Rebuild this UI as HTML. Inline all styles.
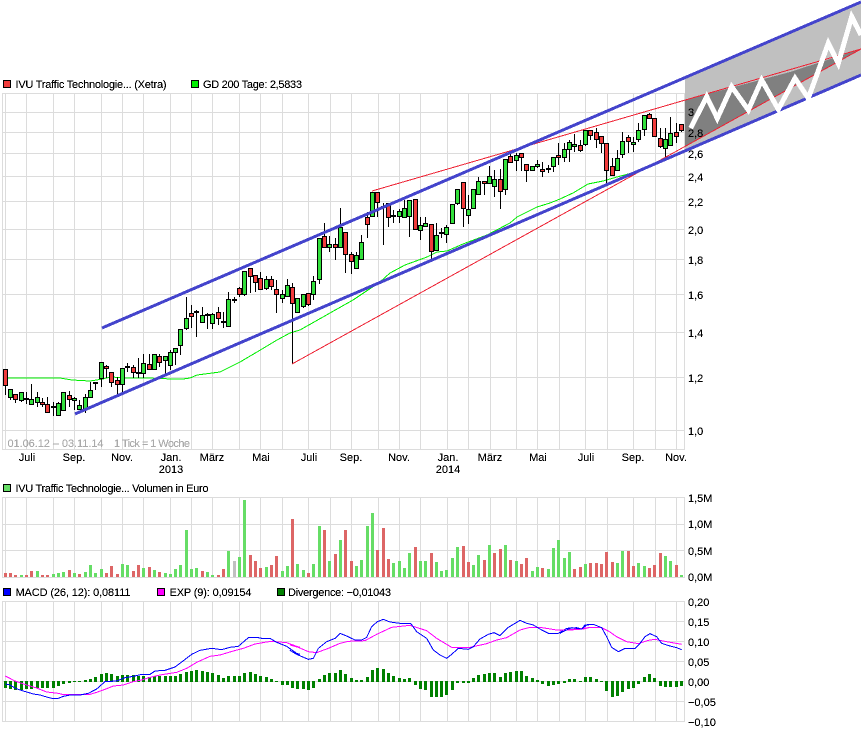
<!DOCTYPE html>
<html><head><meta charset="utf-8"><title>IVU Traffic Technologie Chart</title>
<style>html,body{margin:0;padding:0;background:#fff;width:861px;height:730px;overflow:hidden}svg{display:block}text{font-family:"Liberation Sans",sans-serif;font-size:11px;fill:#000;filter:url(#al)}</style></head>
<body>
<svg width="861" height="730" viewBox="0 0 861 730" shape-rendering="crispEdges">
<defs><filter id="al" x="-5%" y="-20%" width="110%" height="140%" color-interpolation-filters="sRGB"><feComponentTransfer><feFuncA type="linear" slope="3" intercept="-0.55"/></feComponentTransfer></filter></defs>
<!-- grid -->
<path fill="none" stroke="#dcdcdc" d="M2.5 93V450M5.5 93V450M26.5 93V450M53.5 93V450M74.5 93V450M101.5 93V450M122.5 93V450M143.5 93V450M170.5 93V450M191.5 93V450M212.5 93V450M239.5 93V450M260.5 93V450M282.5 93V450M308.5 93V450M330.5 93V450M351.5 93V450M378.5 93V450M399.5 93V450M420.5 93V450M447.5 93V450M468.5 93V450M490.5 93V450M516.5 93V450M537.5 93V450M559.5 93V450M585.5 93V450M607.5 93V450M633.5 93V450M655.5 93V450M676.5 93V450M684.5 93V450
M2 93.5H685M2 112.5H685M2 132.5H685M2 153.5H685M2 176.5H685M2 201.5H685M2 229.5H685M2 259.5H685M2 294.5H685M2 332.5H685M2 377.5H685M2 430.5H685M2 449.5H685
M2.5 497V578M5.5 497V578M26.5 497V578M53.5 497V578M74.5 497V578M101.5 497V578M122.5 497V578M143.5 497V578M170.5 497V578M191.5 497V578M212.5 497V578M239.5 497V578M260.5 497V578M282.5 497V578M308.5 497V578M330.5 497V578M351.5 497V578M378.5 497V578M399.5 497V578M420.5 497V578M447.5 497V578M468.5 497V578M490.5 497V578M516.5 497V578M537.5 497V578M559.5 497V578M585.5 497V578M607.5 497V578M633.5 497V578M655.5 497V578M676.5 497V578M684.5 497V578
M2 497.5H685M2 524.5H685M2 550.5H685M2 577.5H685
M2.5 601V722M5.5 601V722M26.5 601V722M53.5 601V722M74.5 601V722M101.5 601V722M122.5 601V722M143.5 601V722M170.5 601V722M191.5 601V722M212.5 601V722M239.5 601V722M260.5 601V722M282.5 601V722M308.5 601V722M330.5 601V722M351.5 601V722M378.5 601V722M399.5 601V722M420.5 601V722M447.5 601V722M468.5 601V722M490.5 601V722M516.5 601V722M537.5 601V722M559.5 601V722M585.5 601V722M607.5 601V722M633.5 601V722M655.5 601V722M676.5 601V722M684.5 601V722
M2 601.5H685M2 621.5H685M2 641.5H685M2 661.5H685M2 681.5H685M2 701.5H685M2 721.5H685"/>
<!-- forecast channel -->
<polygon fill="#c0c0c0" points="685,78 861,2 861,75 685,151"/>
<polygon fill="#808080" points="685,100 790,72 861,49 685,147"/>
<!-- GD200 -->
<g fill="none" stroke="#00ee00" stroke-width="1">
<polyline points="6,378 60,378 72,380 90,381 103,379 110,377 130,378 147,378 173,379 183,379 190,378 197,375 220,372 240,362 257,352 277,340 290,333 300,330 353,300 368,290 380,282 390,273 405,265 427,257 437,252 447,251 463,244 487,235 510,223 517,217 537,207 550,203 560,199 573,193 588,184 603,181 617,177 632,173 645,167 660,161 665,159"/>
</g>
<!-- wicks -->
<path fill="none" stroke="#000" d="M5.5 369V395M10.5 389V400M15.5 394V403M21.5 392V402M26.5 392V404M31.5 384V404M37.5 392V407M42.5 398V407M47.5 397V412M53.5 402V416M58.5 402V416M63.5 392V410M69.5 391V407M74.5 397V410M79.5 400V410M85.5 394V413M90.5 382V397M95.5 383V390M101.5 362V387M106.5 365V378M111.5 372V387M117.5 377V395M122.5 368V393M127.5 363V372M133.5 365V378M138.5 358V378M143.5 354V378M149.5 354V369M154.5 354V370M159.5 354V367M165.5 356V374M170.5 350V370M175.5 348V365M180.5 329V355M186.5 297V330M191.5 305V328M196.5 310V337M202.5 307V322M207.5 313V329M212.5 313V329M218.5 307V325M223.5 312V328M228.5 292V326M234.5 297V303M239.5 287V297M244.5 271V296M250.5 268V293M255.5 275V292M260.5 272V290M266.5 276V290M271.5 276V290M276.5 280V313M282.5 290V303M287.5 279V296M292.5 283V364M297.5 298V312M303.5 294V308M308.5 293V306M313.5 276V300M319.5 238V284M324.5 223V247M329.5 236V252M335.5 238V260M340.5 208V247M345.5 232V273M351.5 252V274M356.5 252V268M361.5 235V259M367.5 212V238M372.5 192V216M377.5 192V217M383.5 203V245M388.5 203V227M393.5 210V223M399.5 209V223M404.5 200V217M409.5 200V237M415.5 199V230M420.5 217V240M425.5 217V226M431.5 224V259M436.5 223V250M441.5 228V238M446.5 225V243M452.5 204V223M457.5 189V205M463.5 182V227M468.5 195V224M473.5 189V208M478.5 177V194M484.5 181V195M489.5 166V183M494.5 170V197M500.5 169V209M505.5 159V195M510.5 152V162M516.5 153V171M521.5 153V171M526.5 164V182M532.5 166V170M537.5 160V168M542.5 162V177M548.5 165V173M553.5 157V172M558.5 143V165M564.5 143V162M569.5 140V162M574.5 134V152M580.5 140V152M585.5 130V146M590.5 130V140M596.5 128V148M601.5 136V153M606.5 143V183M612.5 158V175M617.5 150V170M622.5 132V158M628.5 135V153M633.5 137V152M638.5 123V142M644.5 115V136M649.5 113V118M654.5 118V137M660.5 128V148M665.5 128V158M670.5 117V145M676.5 123V143M681.5 124V132"/>
<!-- doji -->
<path fill="none" stroke="#000" stroke-width="2" d="M24 399h5M51 407h5M93 383h5M125 367h5M136 373h5M194 312h5M205 315h5M221 322h5M232 300h5M381 207h5M391 216h5M439 233h5M546 169h5"/>
<!-- green bodies -->
<path fill="#33e03c" stroke="#000" d="M8.5 389.5h4V397.5h-4zM19.5 392.5h4V400.5h-4zM29.5 399.5h4V404.5h-4zM35.5 397.5h4V402.5h-4zM56.5 403.5h4V415.5h-4zM61.5 392.5h4V410.5h-4zM72.5 398.5h4V400.5h-4zM77.5 405.5h4V409.5h-4zM83.5 397.5h4V409.5h-4zM88.5 390.5h4V397.5h-4zM99.5 362.5h4V378.5h-4zM120.5 368.5h4V384.5h-4zM141.5 363.5h4V373.5h-4zM152.5 354.5h4V369.5h-4zM163.5 356.5h4V360.5h-4zM168.5 352.5h4V365.5h-4zM173.5 348.5h4V352.5h-4zM178.5 329.5h4V345.5h-4zM184.5 318.5h4V328.5h-4zM200.5 315.5h4V322.5h-4zM210.5 314.5h4V323.5h-4zM226.5 299.5h4V326.5h-4zM242.5 271.5h4V294.5h-4zM264.5 279.5h4V288.5h-4zM280.5 294.5h4V298.5h-4zM285.5 285.5h4V296.5h-4zM295.5 298.5h4V312.5h-4zM301.5 294.5h4V306.5h-4zM311.5 281.5h4V294.5h-4zM317.5 238.5h4V279.5h-4zM327.5 244.5h4V247.5h-4zM338.5 227.5h4V247.5h-4zM354.5 255.5h4V268.5h-4zM359.5 242.5h4V259.5h-4zM370.5 192.5h4V216.5h-4zM397.5 211.5h4V216.5h-4zM402.5 208.5h4V217.5h-4zM407.5 200.5h4V216.5h-4zM418.5 225.5h4V230.5h-4zM423.5 223.5h4V226.5h-4zM434.5 235.5h4V250.5h-4zM444.5 227.5h4V234.5h-4zM450.5 204.5h4V223.5h-4zM455.5 189.5h4V203.5h-4zM466.5 209.5h4V215.5h-4zM471.5 189.5h4V208.5h-4zM476.5 181.5h4V194.5h-4zM487.5 176.5h4V183.5h-4zM492.5 179.5h4V186.5h-4zM503.5 159.5h4V189.5h-4zM514.5 155.5h4V160.5h-4zM530.5 166.5h4V170.5h-4zM535.5 164.5h4V166.5h-4zM551.5 157.5h4V166.5h-4zM562.5 149.5h4V157.5h-4zM567.5 142.5h4V149.5h-4zM572.5 144.5h4V146.5h-4zM583.5 130.5h4V144.5h-4zM615.5 158.5h4V170.5h-4zM620.5 141.5h4V154.5h-4zM631.5 142.5h4V144.5h-4zM636.5 130.5h4V139.5h-4zM642.5 115.5h4V129.5h-4zM663.5 139.5h4V148.5h-4zM668.5 133.5h4V145.5h-4z"/>
<!-- red bodies -->
<path fill="#f03c3c" stroke="#000" d="M3.5 369.5h4V385.5h-4zM13.5 394.5h4V399.5h-4zM40.5 402.5h4V404.5h-4zM45.5 404.5h4V412.5h-4zM67.5 395.5h4V399.5h-4zM104.5 366.5h4V368.5h-4zM109.5 372.5h4V382.5h-4zM115.5 380.5h4V384.5h-4zM131.5 367.5h4V372.5h-4zM147.5 364.5h4V369.5h-4zM157.5 356.5h4V362.5h-4zM189.5 313.5h4V316.5h-4zM216.5 312.5h4V318.5h-4zM237.5 288.5h4V294.5h-4zM248.5 268.5h4V276.5h-4zM253.5 275.5h4V282.5h-4zM258.5 278.5h4V289.5h-4zM269.5 279.5h4V286.5h-4zM274.5 289.5h4V294.5h-4zM290.5 287.5h4V303.5h-4zM306.5 293.5h4V304.5h-4zM322.5 236.5h4V247.5h-4zM333.5 244.5h4V247.5h-4zM343.5 232.5h4V254.5h-4zM349.5 254.5h4V261.5h-4zM365.5 217.5h4V224.5h-4zM375.5 192.5h4V202.5h-4zM386.5 203.5h4V217.5h-4zM413.5 199.5h4V229.5h-4zM429.5 224.5h4V251.5h-4zM461.5 182.5h4V208.5h-4zM482.5 181.5h4V183.5h-4zM498.5 179.5h4V191.5h-4zM508.5 156.5h4V162.5h-4zM519.5 153.5h4V157.5h-4zM524.5 164.5h4V170.5h-4zM540.5 169.5h4V171.5h-4zM556.5 155.5h4V157.5h-4zM578.5 145.5h4V150.5h-4zM588.5 130.5h4V135.5h-4zM594.5 132.5h4V139.5h-4zM599.5 136.5h4V143.5h-4zM604.5 143.5h4V170.5h-4zM610.5 166.5h4V175.5h-4zM626.5 137.5h4V141.5h-4zM647.5 114.5h4V118.5h-4zM652.5 118.5h4V136.5h-4zM658.5 138.5h4V146.5h-4zM674.5 132.5h4V136.5h-4zM679.5 124.5h4V130.5h-4z"/>
<!-- trend lines -->
<g fill="none">
<path stroke="#ee2233" d="M292 364L861 49M372 191L861 49"/>
<path stroke="#4444cc" stroke-width="3" d="M102 328L861 2M75 414L861 75"/>
</g>
<!-- axis labels main -->
<text x="688" y="116">3</text>
<text x="688" y="137">2,8</text>
<text x="688" y="158">2,6</text>
<text x="688" y="181">2,4</text>
<text x="688" y="206">2,2</text>
<text x="688" y="234">2,0</text>
<text x="688" y="264">1,8</text>
<text x="688" y="299">1,6</text>
<text x="688" y="337">1,4</text>
<text x="688" y="382">1,2</text>
<text x="688" y="435">1,0</text>
<!-- zigzag -->
<polyline fill="none" stroke="#fff" stroke-width="5" points="690.7,128 706.7,96.7 717.3,118.3 731.7,86.7 748.3,110 761.7,80 778.3,109.3 795,78.3 808.3,98.3 828.3,43.3 838.3,63.3 851.7,16.7 861,35"/>
<!-- date axis -->
<g text-anchor="middle">
<text x="27" y="461">Juli</text><text x="74" y="461">Sep.</text><text x="122" y="461">Nov.</text><text x="171" y="461">Jan.</text><text x="212" y="461">März</text><text x="261" y="461">Mai</text><text x="309" y="461">Juli</text><text x="351" y="461">Sep.</text><text x="399" y="461">Nov.</text><text x="448" y="461">Jan.</text><text x="490" y="461">März</text><text x="538" y="461">Mai</text><text x="586" y="461">Juli</text><text x="633" y="461">Sep.</text><text x="676" y="461">Nov.</text>
<text x="171" y="473">2013</text><text x="448" y="473">2014</text>
</g>
<text x="7.5" y="447" style="fill:#aaa" textLength="96">01.06.12 – 03.11.14</text>
<text x="114" y="447" style="fill:#aaa" textLength="76">1 Tick = 1 Woche</text>
<!-- legends -->
<rect x="3.5" y="80.5" width="7" height="7" fill="#f03c3c" stroke="#000"/>
<text x="15.5" y="88" textLength="151">IVU Traffic Technologie... (Xetra)</text>
<rect x="191.5" y="80.5" width="7" height="7" fill="#00ee00" stroke="#000"/>
<text x="203" y="88" textLength="99">GD 200 Tage: 2,5833</text>
<rect x="3.5" y="484.5" width="7" height="7" fill="#66dd66" stroke="#000"/>
<text x="15.5" y="492" textLength="193">IVU Traffic Technologie... Volumen in Euro</text>
<rect x="3.5" y="588.5" width="7" height="7" fill="#0000ff" stroke="#000"/>
<text x="15.5" y="596" textLength="115">MACD (26, 12): 0,08111</text>
<rect x="157.5" y="588.5" width="7" height="7" fill="#ff00ff" stroke="#000"/>
<text x="169.5" y="596" textLength="82">EXP (9): 0,09154</text>
<rect x="277.5" y="588.5" width="7" height="7" fill="#008000" stroke="#000"/>
<text x="288" y="596" textLength="103">Divergence: −0,01043</text>
<!-- volume -->
<path fill="none" stroke="#66dd66" stroke-width="3" d="M21.5 575V577M58.5 573V577M63.5 572V577M74.5 573V577M53.5 574V577M37.5 571V577M85.5 572V577M90.5 565V577M95.5 573V577M101.5 569V577M122.5 564V577M127.5 565V577M143.5 568V577M154.5 570V577M165.5 573V577M170.5 574V577M175.5 569V577M180.5 565V577M186.5 530V577M191.5 569V577M196.5 568V577M207.5 572V577M212.5 575V577M228.5 551V577M239.5 557V577M244.5 500V577M266.5 567V577M282.5 571V577M287.5 566V577M297.5 564V577M303.5 570V577M313.5 564V577M319.5 526V577M329.5 561V577M340.5 540V577M356.5 566V577M361.5 560V577M367.5 526V577M372.5 513V577M393.5 563V577M399.5 561V577M404.5 568V577M409.5 553V577M420.5 561V577M425.5 561V577M436.5 562V577M441.5 571V577M446.5 570V577M452.5 558V577M457.5 547V577M473.5 565V577M478.5 555V577M489.5 545V577M505.5 545V577M516.5 561V577M532.5 571V577M537.5 567V577M548.5 569V577M553.5 548V577M558.5 540V577M564.5 558V577M569.5 552V577M585.5 564V577M617.5 563V577M622.5 551V577M638.5 563V577M644.5 566V577M665.5 556V577M670.5 561V577M681.5 575V577"/>
<path fill="none" stroke="#dd6666" stroke-width="3" d="M5.5 573V577M10.5 573V577M15.5 575V577M26.5 575V577M31.5 571V577M42.5 575V577M47.5 575V577M69.5 570V577M79.5 574V577M106.5 573V577M111.5 566V577M117.5 574V577M133.5 571V577M138.5 565V577M149.5 567V577M159.5 572V577M202.5 571V577M218.5 575V577M223.5 569V577M250.5 555V577M255.5 561V577M260.5 568V577M271.5 565V577M276.5 556V577M292.5 519V577M308.5 573V577M324.5 530V577M335.5 554V577M345.5 530V577M351.5 561V577M377.5 550V577M383.5 528V577M388.5 559V577M415.5 547V577M431.5 553V577M463.5 546V577M468.5 562V577M484.5 560V577M494.5 553V577M500.5 549V577M510.5 560V577M521.5 564V577M526.5 558V577M542.5 568V577M574.5 569V577M580.5 567V577M590.5 563V577M596.5 563V577M601.5 564V577M606.5 552V577M612.5 562V577M628.5 551V577M633.5 566V577M649.5 568V577M654.5 565V577M660.5 553V577M676.5 565V577"/>
<path fill="none" stroke="#c0c0c0" stroke-width="3" d="M234.5 561V577"/>
<text x="688" y="502">1,5M</text><text x="688" y="528">1,0M</text><text x="688" y="555">0,5M</text><text x="688" y="581">0,0M</text>
<!-- divergence -->
<path fill="none" stroke="#008000" stroke-width="3" d="M5.5 681V688M10.5 681V689M15.5 681V690M21.5 681V690M26.5 681V689M31.5 681V689M37.5 681V688M42.5 681V688M47.5 681V688M53.5 681V688M58.5 681V686M63.5 681V684M69.5 681V683M74.5 681V682M79.5 681V682M85.5 680V682M90.5 679V682M95.5 677V682M101.5 674V682M106.5 673V682M111.5 674V682M117.5 676V682M122.5 675V682M127.5 675V682M133.5 675V682M138.5 676V682M143.5 676V682M149.5 677V682M154.5 676V682M159.5 676V682M165.5 676V682M170.5 676V682M175.5 676V682M180.5 674V682M186.5 672V682M191.5 671V682M196.5 670V682M202.5 671V682M207.5 672V682M212.5 673V682M218.5 675V682M223.5 678V682M228.5 676V682M234.5 676V682M239.5 676V682M244.5 673V682M250.5 672V682M255.5 674V682M260.5 676V682M266.5 677V682M271.5 679V682M276.5 681V682M282.5 681V685M287.5 681V685M292.5 681V688M297.5 681V689M303.5 681V689M308.5 681V690M313.5 681V688M319.5 679V682M324.5 675V682M329.5 673V682M335.5 673V682M340.5 670V682M345.5 674V682M351.5 678V682M356.5 680V682M361.5 680V682M367.5 677V682M372.5 670V682M377.5 668V682M383.5 669V682M388.5 673V682M393.5 676V682M399.5 678V682M404.5 679V682M409.5 678V682M415.5 681V685M420.5 681V689M425.5 681V690M431.5 681V697M436.5 681V697M441.5 681V697M446.5 681V695M452.5 681V690M457.5 681V683M463.5 681V683M468.5 681V683M473.5 678V682M478.5 675V682M484.5 674V682M489.5 673V682M494.5 673V682M500.5 677V682M505.5 673V682M510.5 672V682M516.5 671V682M521.5 671V682M526.5 676V682M532.5 678V682M537.5 680V682M542.5 681V684M548.5 681V686M553.5 681V685M558.5 681V684M564.5 681V683M569.5 679V682M574.5 679V682M580.5 681V682M585.5 677V682M590.5 677V682M596.5 679V682M601.5 681V682M606.5 681V691M612.5 681V697M617.5 681V696M622.5 681V692M628.5 681V689M633.5 681V688M638.5 681V684M644.5 677V682M649.5 674V682M654.5 678V682M660.5 681V686M665.5 681V687M670.5 681V687M676.5 681V687M681.5 681V686"/>
<!-- MACD lines (zoom-space coords) -->
<g fill="none" stroke-width="3">
<polyline transform="translate(0,585) scale(.33333)" stroke="#ff00ff" points="16,273 45,288 80,300 110,309 140,321 175,325 190,329 220,328 270,328 290,322 315,313 340,303 370,300 400,290 425,285 450,277 480,270 530,262 560,250 590,232 630,214 660,210 700,198 730,190 765,177 800,171 815,169 860,173 890,184 900,187"/>
<polyline transform="translate(0,585) scale(.33333)" stroke="#0000ff" points="16,297 30,300 45,309 60,315 80,321 100,327 120,330 140,336 155,340 175,340 190,334 210,330 240,330 265,325 290,312 315,290 350,288 375,278 400,274 425,268 450,268 465,258 495,256 525,246 545,231 575,208 600,196 635,190 665,194 690,187 715,184 745,158 770,157 785,160 810,160 830,172 860,184 890,205 900,208"/>
<polyline transform="translate(290,585) scale(.33333)" stroke="#ff00ff" points="0,180 25,187 55,200 80,203 115,190 150,175 175,169 225,167 260,148 305,127 360,121 410,137 440,160 485,187 540,187 590,176 620,165 650,158 690,135 720,127 750,127 800,135 840,135 880,132 900,127"/>
<polyline transform="translate(290,585) scale(.33333)" stroke="#0000ff" points="0,196 20,208 55,223 70,220 85,190 110,170 135,160 150,145 170,153 195,165 215,165 230,157 245,125 262,110 280,103 300,111 330,115 362,115 380,140 410,160 430,195 450,210 470,220 485,208 505,190 535,193 550,185 570,162 595,148 612,143 630,152 655,127 690,106 710,115 730,120 755,135 775,145 805,145 830,130 860,128 875,132 885,120 900,118"/>
<polyline transform="translate(560,585) scale(.33333)" stroke="#ff00ff" points="0,136 40,133 65,130 85,128 125,128 145,138 170,155 200,170 235,176 265,166 285,163 320,170 365,178"/>
<polyline transform="translate(560,585) scale(.33333)" stroke="#0000ff" points="0,145 15,137 35,128 65,132 80,120 100,118 125,128 140,155 155,187 175,200 195,190 225,190 240,175 255,155 270,146 290,155 305,175 330,183 350,188 365,194"/>
</g>
<text x="688" y="606">0,20</text><text x="688" y="626">0,15</text><text x="688" y="646">0,10</text><text x="688" y="666">0,05</text><text x="688" y="686">0,00</text><text x="688" y="706">−0,05</text><text x="688" y="726">−0,10</text>
</svg>
</body></html>
